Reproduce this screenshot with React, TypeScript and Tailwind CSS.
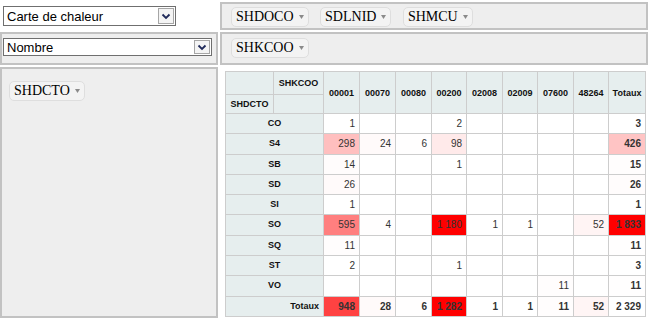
import React from "react";

const cols = ["00001", "00070", "00080", "00200", "02008", "02009", "07600", "48264"];
const colW = ["w-[36px]", "w-[36px]", "w-[36px]", "w-[35px]", "w-[36px]", "w-[35px]", "w-[36px]", "w-[35px]"];

type Row = { label: string; vals: (number | null)[]; total: number };

const rows: Row[] = [
  { label: "CO", vals: [1, null, null, 2, null, null, null, null], total: 3 },
  { label: "S4", vals: [298, 24, 6, 98, null, null, null, null], total: 426 },
  { label: "SB", vals: [14, null, null, 1, null, null, null, null], total: 15 },
  { label: "SD", vals: [26, null, null, null, null, null, null, null], total: 26 },
  { label: "SI", vals: [1, null, null, null, null, null, null, null], total: 1 },
  { label: "SO", vals: [595, 4, null, 1180, 1, 1, null, 52], total: 1833 },
  { label: "SQ", vals: [11, null, null, null, null, null, null, null], total: 11 },
  { label: "ST", vals: [2, null, null, 1, null, null, null, null], total: 3 },
  { label: "VO", vals: [null, null, null, null, null, null, 11, null], total: 11 },
];

const colTotals = [948, 28, 6, 1282, 1, 1, 11, 52];
const grand = 2329;

function heat(min: number, max: number) {
  return (x: number) => {
    const n = 255 - Math.round((255 * (x - min)) / (max - min));
    return `rgb(255,${n},${n})`;
  };
}

const bodyVals = rows.flatMap((r) => r.vals.filter((v): v is number => v !== null));
const bodyHeat = heat(Math.min(...bodyVals), Math.max(...bodyVals));
const rowTotHeat = heat(Math.min(...rows.map((r) => r.total)), Math.max(...rows.map((r) => r.total)));
const colTotHeat = heat(Math.min(...colTotals), Math.max(...colTotals));

function fmt(n: number) {
  return n.toString().replace(/\B(?=(\d{3})+(?!\d))/g, "\u00a0");
}

function Chevron() {
  return (
    <svg width="10" height="7" viewBox="0 0 10 7">
      <polyline points="1.5,1.5 5,5 8.5,1.5" fill="none" stroke="#1f2a5a" strokeWidth="1.8" />
    </svg>
  );
}

function Pill({ name }: { name: string }) {
  return (
    <div className="inline-flex items-center h-[20px] px-[4px] gap-[5px] rounded-[5px] border border-[#dedede] bg-[#f3f3f3] text-[14px] text-black leading-none [font-family:'Liberation_Serif',serif]">
      <span>{name}</span>
      <svg width="5" height="4" viewBox="0 0 5 4">
        <polygon points="0,0 5,0 2.5,4" fill="#8a8a8a" />
      </svg>
    </div>
  );
}

const th = "border border-[#cdcdcd] bg-[#e6eeee] text-[9px] font-bold text-[#111] overflow-visible whitespace-nowrap [font-family:'Liberation_Sans',Arial,sans-serif]";
const td = "border border-[#cdcdcd] px-[4px] py-[5px] leading-[9.3px] text-right text-[10px] text-[#333333] whitespace-nowrap [font-family:'Liberation_Sans',Arial,sans-serif]";

export default function App() {
  return (
    <div className="w-[650px] h-[318px] bg-white overflow-hidden grid grid-cols-[218px_428px] grid-rows-[28px_33px_251px] gap-[2px] pt-[2px]">
      {/* renderer */}
      <div className="pl-[3px] pt-[4px]">
        <div className="flex items-center w-[173px] h-[20px] border border-[#6f6f6f] bg-white pl-[3px] pr-[1px]">
          <span className="flex-1 text-[13px] leading-none text-black [font-family:'Liberation_Sans',Arial,sans-serif]">Carte de chaleur</span>
          <div className="flex items-center justify-center w-[16px] h-[16px] border border-[#a6a6a6] bg-[#f4f4f4]">
            <Chevron />
          </div>
        </div>
      </div>
      {/* unused attrs */}
      <div className="border-2 border-[#c2c2c2] bg-[#eeeeee] pl-[9px] pt-[3px] flex items-start gap-[11.5px]">
        <Pill name="SHDOCO" />
        <Pill name="SDLNID" />
        <Pill name="SHMCU" />
      </div>
      {/* aggregator */}
      <div className="border-2 border-[#c2c2c2] bg-[#eeeeee] pl-[1px] pt-[4px]">
        <div className="flex items-center w-[209px] h-[18px] border border-[#6f6f6f] bg-white pl-[3px] pr-[1px]">
          <span className="flex-1 text-[13px] leading-none text-black [font-family:'Liberation_Sans',Arial,sans-serif]">Nombre</span>
          <div className="flex items-center justify-center w-[16px] h-[14px] border border-[#a6a6a6] bg-[#f4f4f4]">
            <Chevron />
          </div>
        </div>
      </div>
      {/* col attrs */}
      <div className="border-2 border-[#c2c2c2] bg-[#eeeeee] pl-[9px] pt-[4px] flex items-start">
        <Pill name="SHKCOO" />
      </div>
      {/* row attrs */}
      <div className="border-2 border-[#c2c2c2] bg-[#eeeeee] pl-[7px] pt-[8px]">
        <Pill name="SHDCTO" />
      </div>
      {/* output */}
      <div className="pl-[5px] pt-[4px]">
        <table className="border-collapse table-fixed w-[420px]">
          <colgroup>
            <col className="w-[48px]" />
            <col className="w-[50px]" />
            {colW.map((w, i) => (
              <col key={i} className={w} />
            ))}
            <col className="w-[37px]" />
          </colgroup>
          <thead>
            <tr>
              <th className={`${th} h-[23px] px-[4px]`}></th>
              <th className={`${th} h-[23px] px-[4px] text-center leading-[10px]`}>SHKCOO</th>
              {cols.map((c) => (
                <th key={c} rowSpan={2} className={`${th} px-[2px] text-center leading-[10px]`}>
                  {c}
                </th>
              ))}
              <th rowSpan={2} className={`${th} px-[2px] text-center leading-[10px]`}>
                Totaux
              </th>
            </tr>
            <tr>
              <th className={`${th} h-[19px] px-[4px] text-center leading-[10px]`}>SHDCTO</th>
              <th className={`${th} h-[19px]`}></th>
            </tr>
          </thead>
          <tbody>
            {rows.map((r) => (
              <tr key={r.label}>
                <th colSpan={2} className={`${th} px-[4px] py-[5px] leading-[9.3px] text-center`}>
                  {r.label}
                </th>
                {r.vals.map((v, i) => (
                  <td key={i} className={td} style={{ backgroundColor: v === null ? "#ffffff" : bodyHeat(v) }}>
                    {v === null ? "" : fmt(v)}
                  </td>
                ))}
                <td className={`${td} font-bold`} style={{ backgroundColor: rowTotHeat(r.total) }}>
                  {fmt(r.total)}
                </td>
              </tr>
            ))}
            <tr>
              <th colSpan={2} className={`${th} px-[4px] py-[5px] leading-[9.3px] text-right`}>
                Totaux
              </th>
              {colTotals.map((v, i) => (
                <td key={i} className={`${td} font-bold`} style={{ backgroundColor: colTotHeat(v) }}>
                  {fmt(v)}
                </td>
              ))}
              <td className={`${td} font-bold bg-white`}>{fmt(grand)}</td>
            </tr>
          </tbody>
        </table>
      </div>
    </div>
  );
}
